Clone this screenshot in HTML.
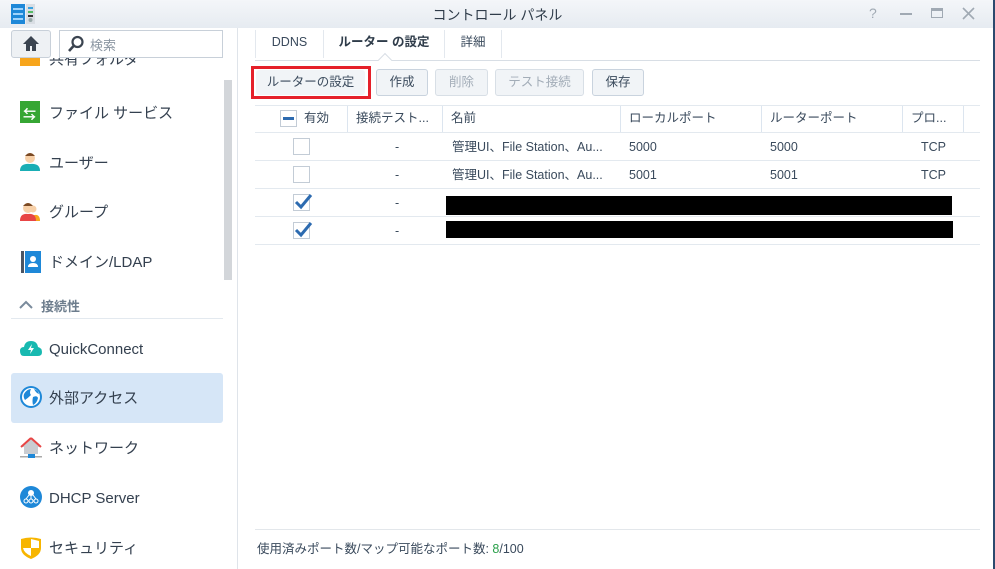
<!DOCTYPE html><html><head><meta charset="utf-8"><style>
*{box-sizing:border-box;margin:0;padding:0}
body{width:995px;height:569px;overflow:hidden;background:#fff;font-family:"Liberation Sans","Noto Sans CJK JP",sans-serif;color:#3a4a5c;position:relative;font-size:13px}
.a{position:absolute}
.title{left:0;top:0;width:995px;height:28px;background:linear-gradient(#f4f6f9,#e6ebf1);}
.si{left:49px;font-size:15px;line-height:20px;color:#34404f;white-space:nowrap;margin-top:2px}
.ic{left:20px;width:20px;height:20px}
.tab{top:30px;height:28px;line-height:24px;font-size:12.5px;text-align:center;border-right:1px solid #e3e8ee}
.btn{top:69px;height:27px;border:1px solid #c9d3de;border-radius:3px;background:#f1f4f7;font-size:12.5px;text-align:center;line-height:25px;color:#3a4a5c}
.dis{color:#a3adb8;border-color:#d8dfe6}
.hd{top:106px;height:26px;line-height:25px;font-size:12.5px;color:#3a4a5c;border-right:1px solid #dce5ef;padding-left:8px;white-space:nowrap}
.row{left:255px;width:725px;height:1px;background:#e3e9ef}
.c{font-size:12.5px;line-height:16px;height:16px;color:#3a4a5c;white-space:nowrap}
.cb{width:17px;height:17px;border:1px solid #c3ccd6;background:#fff}
</style></head><body>
<div class="a title"></div>
<div class="a" style="left:993px;top:0;width:2px;height:569px;background:#2c4a6e"></div>
<svg class="a" style="left:11px;top:4px" width="25" height="20"><rect x="0" y="0" width="14" height="20" fill="#1e88d8"/><rect x="2" y="4" width="10" height="2" fill="#9fd3fb"/><rect x="2" y="9" width="10" height="2" fill="#9fd3fb"/><rect x="2" y="14" width="10" height="2" fill="#9fd3fb"/><rect x="15" y="0" width="9" height="20" fill="#d9dee4"/><rect x="17" y="3" width="5" height="2" fill="#3aa3e0"/><rect x="17" y="7" width="5" height="2" fill="#5b6"/><rect x="17" y="11" width="5" height="2" fill="#333"/><circle cx="19.5" cy="16" r="2" fill="#9aa"/></svg>
<div class="a" style="left:0;top:5px;width:995px;text-align:center;font-size:14px;color:#2f3c4a">コントロール パネル</div>
<div class="a" style="left:869px;top:5px;font-size:14px;color:#a0a9b3">?</div>
<div class="a" style="left:900px;top:13px;width:12px;height:2px;background:#a0a9b3"></div>
<div class="a" style="left:931px;top:8px;width:12px;height:10px;border:1px solid #a0a9b3;border-top:3px solid #a0a9b3"></div>
<svg class="a" style="left:962px;top:7px" width="13" height="13"><path d="M1 1L12 12M12 1L1 12" stroke="#a0a9b3" stroke-width="1.6"/></svg>
<!-- sidebar -->
<div class="a" style="left:237px;top:28px;width:1px;height:541px;background:#dfe4ea"></div>
<div class="a" style="left:224px;top:80px;width:8px;height:200px;background:#d3d6da"></div>
<div class="a" style="left:11px;top:30px;width:40px;height:28px;border:1px solid #c8d0d9;border-radius:3px;background:#eef1f4"></div>
<svg class="a" style="left:22px;top:35px" width="18" height="17"><path d="M9 1L1 9h3v7h4v-5h2v5h4V9h3z" fill="#3b4450"/></svg>
<div class="a" style="left:59px;top:30px;width:164px;height:28px;border:1px solid #c8d0d9;background:#fff"></div>
<svg class="a" style="left:67px;top:35px" width="18" height="18"><circle cx="10.5" cy="7" r="5" stroke="#3b4450" stroke-width="2.2" fill="none"/><path d="M7 10.5L2 16" stroke="#3b4450" stroke-width="2.6"/></svg>
<div class="a" style="left:90px;top:35px;font-size:13px;color:#8b96a2">検索</div>
<div class="a" style="left:0;top:58px;width:224px;height:14px;overflow:hidden"><div class="a si" style="top:-10px">共有フォルダ</div><div class="a" style="left:20px;top:-6px;width:20px;height:14px;background:#f7a51c"></div></div>
<div class="a" style="left:20px;top:101px;width:20px;height:22px;background:#36a634"></div><div class="a" style="left:23px;top:104px;color:#fff;font-size:13px;font-weight:bold">⇆</div>
<div class="a si" style="top:102px">ファイル サービス</div>
<svg class="a ic" style="top:151px"><circle cx="10" cy="7" r="5" fill="#f7d0a8"/><path d="M5 5Q10 -1 15 5" fill="#7b4a24"/><path d="M0 20Q0 12 10 13Q20 12 20 20z" fill="#1aaeb5"/></svg>
<div class="a si" style="top:152px">ユーザー</div>
<svg class="a ic" style="top:201px"><circle cx="13" cy="8" r="3.5" fill="#f7d0a8"/><path d="M10 20Q11 13 17 14Q20 15 20 20z" fill="#f7a51c"/><circle cx="8" cy="7" r="5" fill="#f7d0a8"/><path d="M3 5Q8 -1 13 5" fill="#7b4a24"/><path d="M0 20Q0 12 8 13Q16 12 16 20z" fill="#e84545"/></svg>
<div class="a si" style="top:201px">グループ</div>
<div class="a" style="left:21px;top:251px;width:3px;height:22px;background:#4b5563"></div><div class="a" style="left:25px;top:251px;width:16px;height:22px;background:#1e88d8"></div><svg class="a" style="left:27px;top:255px" width="12" height="14"><circle cx="6" cy="4" r="3" fill="#fff"/><path d="M1 12Q1 8 6 8Q11 8 11 12z" fill="#fff"/></svg>
<div class="a si" style="top:251px">ドメイン/LDAP</div>
<svg class="a" style="left:19px;top:300px" width="14" height="10"><path d="M1 8L7 2L13 8" stroke="#7a8b9c" stroke-width="2" fill="none"/></svg>
<div class="a" style="left:41px;top:296px;font-size:13px;color:#6d7d8d;font-weight:bold">接続性</div>
<div class="a" style="left:11px;top:318px;width:212px;height:1px;background:#e3e9ef"></div>
<svg class="a" style="left:20px;top:338px" width="22" height="20"><path d="M4 18Q0 18 0 13Q0 9 4 9Q5 3 11 3Q17 3 18 9Q22 10 22 14Q22 18 18 18z" fill="#18b9b0"/><path d="M12 6L8 12h3l-1 4 4-6h-3z" fill="#fff"/></svg>
<div class="a si" style="top:338px">QuickConnect</div>
<div class="a" style="left:11px;top:373px;width:212px;height:50px;background:#d6e6f7;border-radius:3px"></div>
<svg class="a" style="left:20px;top:386px" width="22" height="22"><circle cx="11" cy="11" r="11" fill="#1e88d8"/><circle cx="11" cy="11" r="9" fill="#fff"/><path d="M4 8Q7 3 11 3Q9 7 11 9Q8 12 5 14Q3 11 4 8zM13 11Q17 9 18 12Q17 17 13 19Q12 15 13 11zM14 3Q18 4 19 8Q16 7 14 3z" fill="#1e88d8"/></svg>
<div class="a si" style="top:387px">外部アクセス</div>
<svg class="a" style="left:20px;top:437px" width="22" height="22"><path d="M11 1L1 10h3v7h14v-7h3z" fill="#c9ccd1"/><path d="M11 1L1 10" stroke="#e84545" stroke-width="2"/><path d="M11 1L21 10" stroke="#e84545" stroke-width="2"/><rect x="0" y="19" width="22" height="1.5" fill="#aaa"/><rect x="8" y="17" width="7" height="4" fill="#1e88d8"/></svg>
<div class="a si" style="top:437px">ネットワーク</div>
<svg class="a" style="left:20px;top:486px" width="22" height="22"><circle cx="11" cy="11" r="11" fill="#1e88d8"/><circle cx="11" cy="7" r="3" fill="#fff"/><circle cx="6" cy="15" r="2" stroke="#fff" fill="none"/><circle cx="11" cy="15" r="2" stroke="#fff" fill="none"/><circle cx="16" cy="15" r="2" stroke="#fff" fill="none"/><path d="M11 10v3M9 9L6 13M13 9l3 4" stroke="#fff"/></svg>
<div class="a si" style="top:487px">DHCP Server</div>
<svg class="a" style="left:20px;top:536px" width="22" height="24"><path d="M1 3Q11 0 21 3V12Q21 19 11 23Q1 19 1 12z" fill="#f7b500"/><path d="M11 3v9h8V5zM3 12h8v8Q4 17 3 12z" fill="#fff"/></svg>
<div class="a si" style="top:537px">セキュリティ</div>
<!-- tabs -->
<div class="a" style="left:255px;top:30px;width:1px;height:28px;background:#e3e8ee"></div>
<div class="a tab" style="left:256px;width:68px;color:#3a4a5c">DDNS</div>
<div class="a tab" style="left:324px;width:121px;font-weight:bold;color:#2f3c4a">ルーター の設定</div>
<div class="a tab" style="left:445px;width:57px;color:#3a4a5c">詳細</div>
<div class="a" style="left:255px;top:60px;width:725px;height:1px;background:#d8dee5"></div>
<div class="a" style="left:380px;top:55px;width:10px;height:10px;background:#fff;border-left:1px solid #d8dee5;border-top:1px solid #d8dee5;transform:rotate(45deg)"></div>
<!-- buttons -->
<div class="a" style="left:251px;top:66px;width:120px;height:33px;border:3px solid #e5202a"></div>
<div class="a btn" style="left:256px;width:109px;top:70px;height:25px;line-height:25px;border:none">ルーターの設定</div>
<div class="a btn" style="left:376px;width:52px">作成</div>
<div class="a btn dis" style="left:435px;width:53px">削除</div>
<div class="a btn dis" style="left:495px;width:89px">テスト接続</div>
<div class="a btn" style="left:592px;width:52px">保存</div>
<!-- table -->
<div class="a row" style="top:105px"></div>
<div class="a hd" style="left:255px;width:93px;padding-left:49px">有効</div>
<div class="a cb" style="left:280px;top:110px"></div><div class="a" style="left:283px;top:117px;width:11px;height:3px;background:#2d6bb0"></div>
<div class="a hd" style="left:348px;width:95px">接続テスト...</div>
<div class="a hd" style="left:443px;width:178px">名前</div>
<div class="a hd" style="left:621px;width:141px">ローカルポート</div>
<div class="a hd" style="left:762px;width:141px">ルーターポート</div>
<div class="a hd" style="left:903px;width:61px">プロ...</div>
<div class="a row" style="top:132px"></div>
<div class="a row" style="top:160px"></div>
<div class="a row" style="top:188px"></div>
<div class="a row" style="top:216px"></div>
<div class="a row" style="top:244px"></div>
<div class="a cb" style="left:293px;top:138px"></div>
<div class="a cb" style="left:293px;top:166px"></div>
<div class="a cb" style="left:293px;top:194px"></div>
<div class="a cb" style="left:293px;top:222px"></div>
<svg class="a" style="left:293px;top:192px" width="20" height="18"><path d="M3 10L8 15L18 3" stroke="#2d6bb0" stroke-width="3" fill="none"/></svg>
<svg class="a" style="left:293px;top:220px" width="20" height="18"><path d="M3 10L8 15L18 3" stroke="#2d6bb0" stroke-width="3" fill="none"/></svg>
<div class="a c" style="left:395px;top:139px">-</div>
<div class="a c" style="left:395px;top:167px">-</div>
<div class="a c" style="left:395px;top:195px">-</div>
<div class="a c" style="left:395px;top:223px">-</div>
<div class="a c" style="left:452px;top:139px">管理UI、File Station、Au...</div>
<div class="a c" style="left:452px;top:167px">管理UI、File Station、Au...</div>
<div class="a c" style="left:629px;top:139px">5000</div><div class="a c" style="left:770px;top:139px">5000</div><div class="a c" style="left:921px;top:139px">TCP</div>
<div class="a c" style="left:629px;top:167px">5001</div><div class="a c" style="left:770px;top:167px">5001</div><div class="a c" style="left:921px;top:167px">TCP</div>
<div class="a" style="left:446px;top:196px;width:506px;height:19px;background:#000"></div>
<div class="a" style="left:446px;top:221px;width:507px;height:17px;background:#000"></div>
<!-- footer -->
<div class="a" style="left:255px;top:529px;width:725px;height:1px;background:#e3e7eb"></div>
<div class="a" style="left:257px;top:538px;font-size:12.5px;color:#3a4a5c">使用済みポート数/マップ可能なポート数: <span style="color:#2aa04a">8</span>/100</div>
</body></html>
